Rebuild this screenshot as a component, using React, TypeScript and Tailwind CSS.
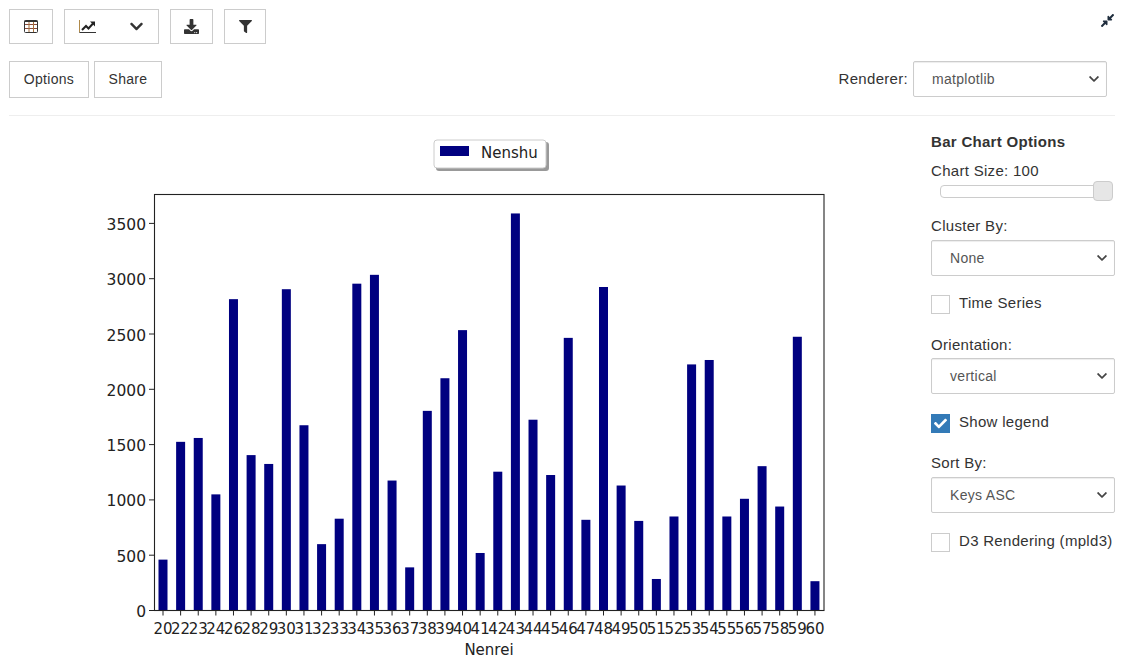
import React from 'react';
import { FaChevronDown, FaCheck, FaCompressAlt, FaDownload, FaFilter } from 'react-icons/fa';

const ages = [20, 22, 23, 24, 26, 28, 29, 30, 31, 32, 33, 34, 35, 36, 37, 38, 39, 40, 41, 42, 43, 44, 45, 46, 47, 48, 49, 50, 51, 52, 53, 54, 55, 56, 57, 58, 59, 60];
const counts = [460, 1525, 1560, 1050, 2815, 1405, 1325, 2905, 1675, 600, 830, 2955, 3035, 1175, 390, 1805, 2100, 2535, 520, 1255, 3590, 1725, 1225, 2465, 820, 2925, 1130, 810, 285, 850, 2225, 2265, 850, 1010, 1305, 940, 2475, 265];
const yTicks = [0, 500, 1000, 1500, 2000, 2500, 3000, 3500];

const PLOT_LEFT = 154.5;
const PLOT_RIGHT = 824;
const PLOT_TOP = 194.5 - 116;
const PLOT_BOTTOM = 610.5 - 116;
const PX_PER_UNIT = 55.3 / 500;

const barX = (i: number) => 163 + i * 17.62;
const barY = (v: number) => PLOT_BOTTOM - v * PX_PER_UNIT;

const BarChart = () => (
    <svg width={900} height={551} viewBox="0 0 900 551" className="block shrink-0 tracking-normal" style={{ fontFamily: '"DejaVu Sans", sans-serif' }}>
        {/* legend */}
        <rect x={436} y={26} width={113} height={29} rx={3} fill="#999" />
        <rect x={434} y={24} width={112} height={28} rx={3} fill="#fff" stroke="#ccc" />
        <rect x={440} y={30} width={29} height={10} fill="#000080" />
        <text x={481} y={42} fontSize={15} fill="#222">Nenshu</text>

        {/* bars */}
        {counts.map((v, i) => (
            <rect key={ages[i]} x={barX(i) - 4.5} y={barY(v)} width={9} height={PLOT_BOTTOM - barY(v)} fill="#000080" />
        ))}

        {/* frame */}
        <rect x={PLOT_LEFT} y={PLOT_TOP} width={PLOT_RIGHT - PLOT_LEFT} height={PLOT_BOTTOM - PLOT_TOP} fill="none" stroke="#222" strokeWidth={1.1} />

        {/* y axis */}
        {yTicks.map((t) => (
            <g key={t}>
                <line x1={149} x2={PLOT_LEFT} y1={barY(t)} y2={barY(t)} stroke="#222" />
                <text x={146} y={barY(t) + 6.5} fontSize={15.5} textAnchor="end" fill="#222">{t}</text>
            </g>
        ))}

        {/* x axis */}
        {ages.map((a, i) => (
            <g key={a}>
                <line x1={barX(i)} x2={barX(i)} y1={PLOT_BOTTOM} y2={PLOT_BOTTOM + 5} stroke="#222" />
                <text x={barX(i)} y={PLOT_BOTTOM + 23} fontSize={15} textAnchor="middle" fill="#222">{a}</text>
            </g>
        ))}
        <text x={489} y={539} fontSize={15} textAnchor="middle" fill="#222">Nenrei</text>
    </svg>
);

const TableIcon = () => (
    <svg width={14} height={13} viewBox="0 0 14 13" fill="none">
        <path d="M1 4.5H13M1 8.5H13" stroke="#8a4b3c" />
        <path d="M5 1V12M9.5 1V12" stroke="#a8703a" />
        <rect x={0.5} y={0.5} width={13} height={12} rx={1} stroke="#333" />
        <path d="M0.5 0.5H13.5V2H0.5Z" fill="#333" />
    </svg>
);

const LineChartIcon = () => (
    <svg width={17} height={13} viewBox="0 0 17 13" fill="none">
        <path d="M0.5 0V12.5" stroke="#b08a4a" />
        <path d="M0.5 12.5H17" stroke="#333" />
        <path d="M3 10L7 6L9.5 8.5L14 3.5" stroke="#222" strokeWidth={2} />
        <path d="M11 1.5H16V6.5Z" fill="#222" />
    </svg>
);

const Select = ({ value, className }: { value: string; className: string }) => (
    <div className={`flex items-center justify-between border border-[#ccc] rounded-[2px] shadow-[inset_0_1px_1px_rgba(0,0,0,0.075)] pl-[18px] pr-[7px] text-[14px] text-[#555] ${className}`}>
        <span>{value}</span>
        <FaChevronDown className="w-[10px] h-[12px] text-[#444]" />
    </div>
);

const Check = ({ label, checked }: { label: string; checked?: boolean }) => (
    <div className="flex items-center gap-[9px] h-[20px] whitespace-nowrap">
        {checked ? (
            <span className="w-[19px] h-[19px] bg-[#337ab7] flex items-center justify-center">
                <FaCheck className="w-[13px] h-[13px] text-white" />
            </span>
        ) : (
            <span className="w-[19px] h-[19px] border border-[#ccc] bg-white" />
        )}
        <span className="-mt-px">{label}</span>
    </div>
);

const ToolBtn = ({ className, children }: { className: string; children: React.ReactNode }) => (
    <button className={`flex items-center h-[35px] border border-[#ccc] bg-white text-[#333] ${className}`}>
        {children}
    </button>
);

export default function App() {
    return (
        <div className="w-[1125px] h-[670px] overflow-hidden bg-white text-[15px] tracking-[0.3px] text-[#333]" style={{ fontFamily: '"Liberation Sans", Arial, sans-serif' }}>
            {/* Toolbar */}
            <div className="flex items-start justify-between pl-[9px] pr-[10px] pt-[9px]">
                <div className="flex gap-[11px]">
                    <ToolBtn className="w-[44px] justify-center"><TableIcon /></ToolBtn>
                    <ToolBtn className="w-[95px] justify-between pl-[14px] pr-[15px]">
                        <LineChartIcon />
                        <FaChevronDown className="w-[13px] h-[15px]" />
                    </ToolBtn>
                    <ToolBtn className="w-[43px] justify-center"><FaDownload className="w-[15px] h-[15px]" /></ToolBtn>
                    <ToolBtn className="w-[42px] justify-center"><FaFilter className="w-[13px] h-[13px]" /></ToolBtn>
                </div>
                <div className="mt-[4px]"><FaCompressAlt className="w-[15px] h-[15px] text-[#1f2d3d]" /></div>
            </div>

            <div className="flex items-start justify-between pl-[9px] pr-[18px] mt-[17px]">
                <div className="flex gap-[5px] text-[14px]">
                    <button className="w-[80px] h-[37px] border border-[#ccc]">Options</button>
                    <button className="w-[68px] h-[37px] border border-[#ccc]">Share</button>
                </div>
                <div className="flex items-center gap-[5px]">
                    <span>Renderer:</span>
                    <Select value="matplotlib" className="w-[194px] h-[36px]" />
                </div>
            </div>

            <div className="mx-[9px] w-[1106px] mt-[17px] border-t border-[#eee]" />

            {/* Chart and options */}
            <div className="flex">
                <BarChart />
                <div className="ml-[31px] w-[184px] pt-[16px] shrink-0">
                    <div className="font-bold leading-[20px]">Bar Chart Options</div>
                    <div className="mt-[9px] leading-[20px]">Chart Size: 100</div>
                    <div className="relative ml-[9px] mt-[4px] h-[13px] w-[165px] border border-[#ccc] rounded-[4px] bg-white">
                        <span className="absolute -right-[9px] -top-[5px] w-[20px] h-[20px] border border-[#ccc] rounded-[4px] bg-[#e6e6e6]" />
                    </div>
                    <div className="mt-[18px] leading-[20px]">Cluster By:</div>
                    <Select value="None" className="mt-[4px] h-[36px] w-[184px]" />
                    <div className="mt-[18px]"><Check label="Time Series" /></div>
                    <div className="mt-[21px] leading-[20px]">Orientation:</div>
                    <Select value="vertical" className="mt-[3px] h-[36px] w-[184px]" />
                    <div className="mt-[19px]"><Check label="Show legend" checked /></div>
                    <div className="mt-[20px] leading-[20px]">Sort By:</div>
                    <Select value="Keys ASC" className="mt-[4px] h-[36px] w-[184px]" />
                    <div className="mt-[19px]"><Check label="D3 Rendering (mpld3)" /></div>
                </div>
            </div>
        </div>
    );
}
